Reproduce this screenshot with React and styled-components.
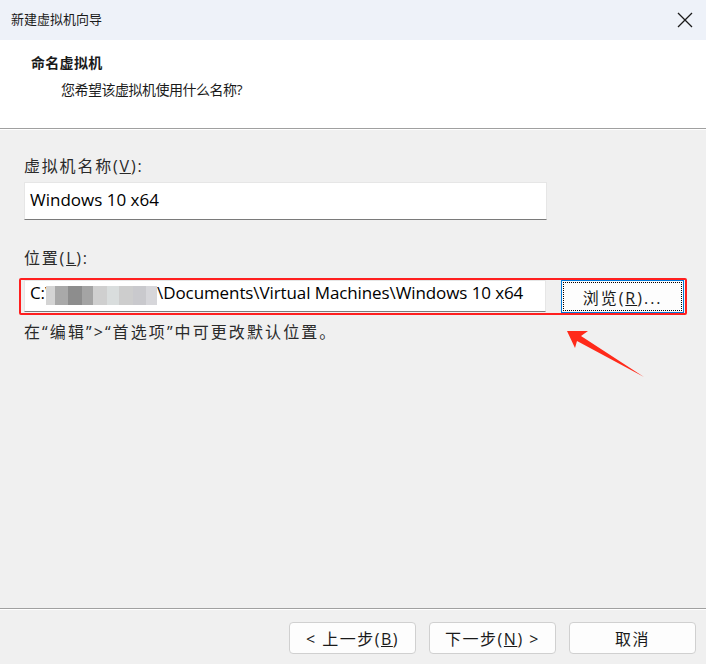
import React from 'react';
import styled, { createGlobalStyle } from 'styled-components';

const Global = createGlobalStyle`
    html, body {
        margin: 0;
        padding: 0;
        background: #f0f0f0;
    }
`;

const CJK = `"Open Sans", "Noto Sans CJK SC", sans-serif`;

const Dialog = styled.div`
    position: relative;
    width: 706px;
    height: 664px;
    display: flex;
    flex-direction: column;
    background: #f0f0f0;
    font-family: ${CJK};
    color: #1a1a1a;
    overflow: hidden;
`;

const TitleBar = styled.div`
    height: 40px;
    flex: none;
    box-sizing: border-box;
    display: flex;
    align-items: center;
    justify-content: space-between;
    padding: 0 13px 3px 11px;
    background: #eef2f9;
    font-size: 13px;
    line-height: 20px;
`;

const Close = styled.svg`
    width: 16px;
    height: 16px;
    margin-top: 2px;
`;

const Header = styled.div`
    flex: none;
    height: 89px;
    box-sizing: border-box;
    padding-top: 13px;
    background: #fff;
    border-bottom: 1px solid #a0a0a0;
    box-shadow: 0 1px 0 #fff;
`;

const Heading = styled.div`
    padding-left: 31px;
    font-size: 14px;
    font-weight: 700;
    line-height: 20px;
    letter-spacing: 0.3px;
`;

const Sub = styled.div`
    margin-top: 7px;
    padding-left: 61px;
    font-size: 14px;
    line-height: 20px;
    letter-spacing: -0.5px;
`;

const Body = styled.div`
    flex: 1;
    display: flex;
    flex-direction: column;
    align-items: flex-start;
    padding: 1px 19px 0 24px;
`;

const Label = styled.div`
    margin-top: ${p => p.$top}px;
    font-size: 16px;
    line-height: 20px;
    letter-spacing: 1.8px;
    color: #2a2a2a;
`;

const Field = styled.div`
    box-sizing: border-box;
    width: 523px;
    height: ${p => p.$h}px;
    margin-top: ${p => p.$top || 0}px;
    display: flex;
    align-items: center;
    padding: 0 0 ${p => p.$pb}px 5px;
    background: #fff;
    border: 1px solid #e6e6e6;
    border-bottom: 1px solid #7a7a7a;
    font-family: "Open Sans", sans-serif;
    font-size: 17px;
    letter-spacing: ${p => p.$ls || 0}px;
    color: #000;
    white-space: nowrap;
    overflow: hidden;
`;

const Blur = styled.span`
    display: inline-block;
    flex: none;
    width: 111px;
    height: 19px;
    margin: 6px 0 0 -5px;
    background: linear-gradient(90deg,
        #d4d4d4 0 8%, #a9a9a9 8% 20%, #8d8d8d 20% 32%, #a4a4a4 32% 42%,
        #cfcfcf 42% 55%, #d9dddd 55% 66%, #cdcdcd 66% 78%, #c9c9cd 78% 90%, #d6d6da 90% 100%);
    filter: blur(0.6px);
`;

const Frame = styled.div`
    margin: 10px 0 0 -5px;
    width: 668px;
    box-sizing: border-box;
    display: flex;
    align-items: flex-start;
    gap: 15px;
    padding: 0 1px 0 3px;
    border: 2px solid #ff1f1f;
    border-radius: 2px;
`;

const Browse = styled.button`
    box-sizing: border-box;
    width: 123px;
    height: 33px;
    margin: 0;
    padding: 0;
    background: #fdfdfd;
    border: 1px solid #0078d7;
    outline: 1px dotted #000;
    outline-offset: -3px;
    font-family: ${CJK};
    font-size: 16px;
    color: #1a1a1a;
    letter-spacing: 2px;
`;

const Hint = styled.div`
    margin-top: 7px;
    font-size: 16px;
    line-height: 20px;
    letter-spacing: 2.1px;
    color: #2a2a2a;
`;

const Footer = styled.div`
    flex: none;
    height: 56px;
    box-sizing: border-box;
    display: flex;
    justify-content: flex-end;
    gap: 13px;
    padding: 13px 10px 0 0;
    border-top: 1px solid #a0a0a0;
    box-shadow: inset 0 1px 0 #fff;
`;

const Btn = styled.button`
    box-sizing: border-box;
    width: 127px;
    height: 32px;
    background: #fdfdfd;
    border: 1px solid #d0d0d0;
    border-radius: 4px;
    font-family: ${CJK};
    font-size: 16px;
    color: #1a1a1a;
    letter-spacing: 1.5px;
`;

const Arrow = styled.svg`
    position: absolute;
    left: 560px;
    top: 325px;
    width: 90px;
    height: 58px;
`;

const App = () => {
    return (
        <Dialog>
            <Global />
            <TitleBar>
                <span>新建虚拟机向导</span>
                <Close viewBox="0 0 16 16">
                    <path d="M1 1 L15 15 M15 1 L1 15" stroke="#1a1a1a" strokeWidth="1.3" fill="none" />
                </Close>
            </TitleBar>
            <Header>
                <Heading>命名虚拟机</Heading>
                <Sub>您希望该虚拟机使用什么名称?</Sub>
            </Header>
            <Body>
                <Label $top={26}>虚拟机名称(<u>V</u>):</Label>
                <Field $h={38} $top={6} $pb={4}>Windows 10 x64</Field>
                <Label $top={28}>位置(<u>L</u>):</Label>
                <Frame>
                    <Field $h={32} $pb={7} $ls={-0.1}>C:\<Blur />\Documents\Virtual Machines\Windows 10 x64</Field>
                    <Browse>浏览(<u>R</u>)...</Browse>
                </Frame>
                <Hint>在“编辑”&gt;“首选项”中可更改默认位置。</Hint>
            </Body>
            <Footer>
                <Btn>&lt; 上一步(<u>B</u>)</Btn>
                <Btn>下一步(<u>N</u>) &gt;</Btn>
                <Btn>取消</Btn>
            </Footer>
            <Arrow viewBox="0 0 90 58">
                <polygon points="7,6 28,6 21,11 84,52 17,16 15,23" fill="#ff2a1a" />
            </Arrow>
        </Dialog>
    );
};

export default App;
